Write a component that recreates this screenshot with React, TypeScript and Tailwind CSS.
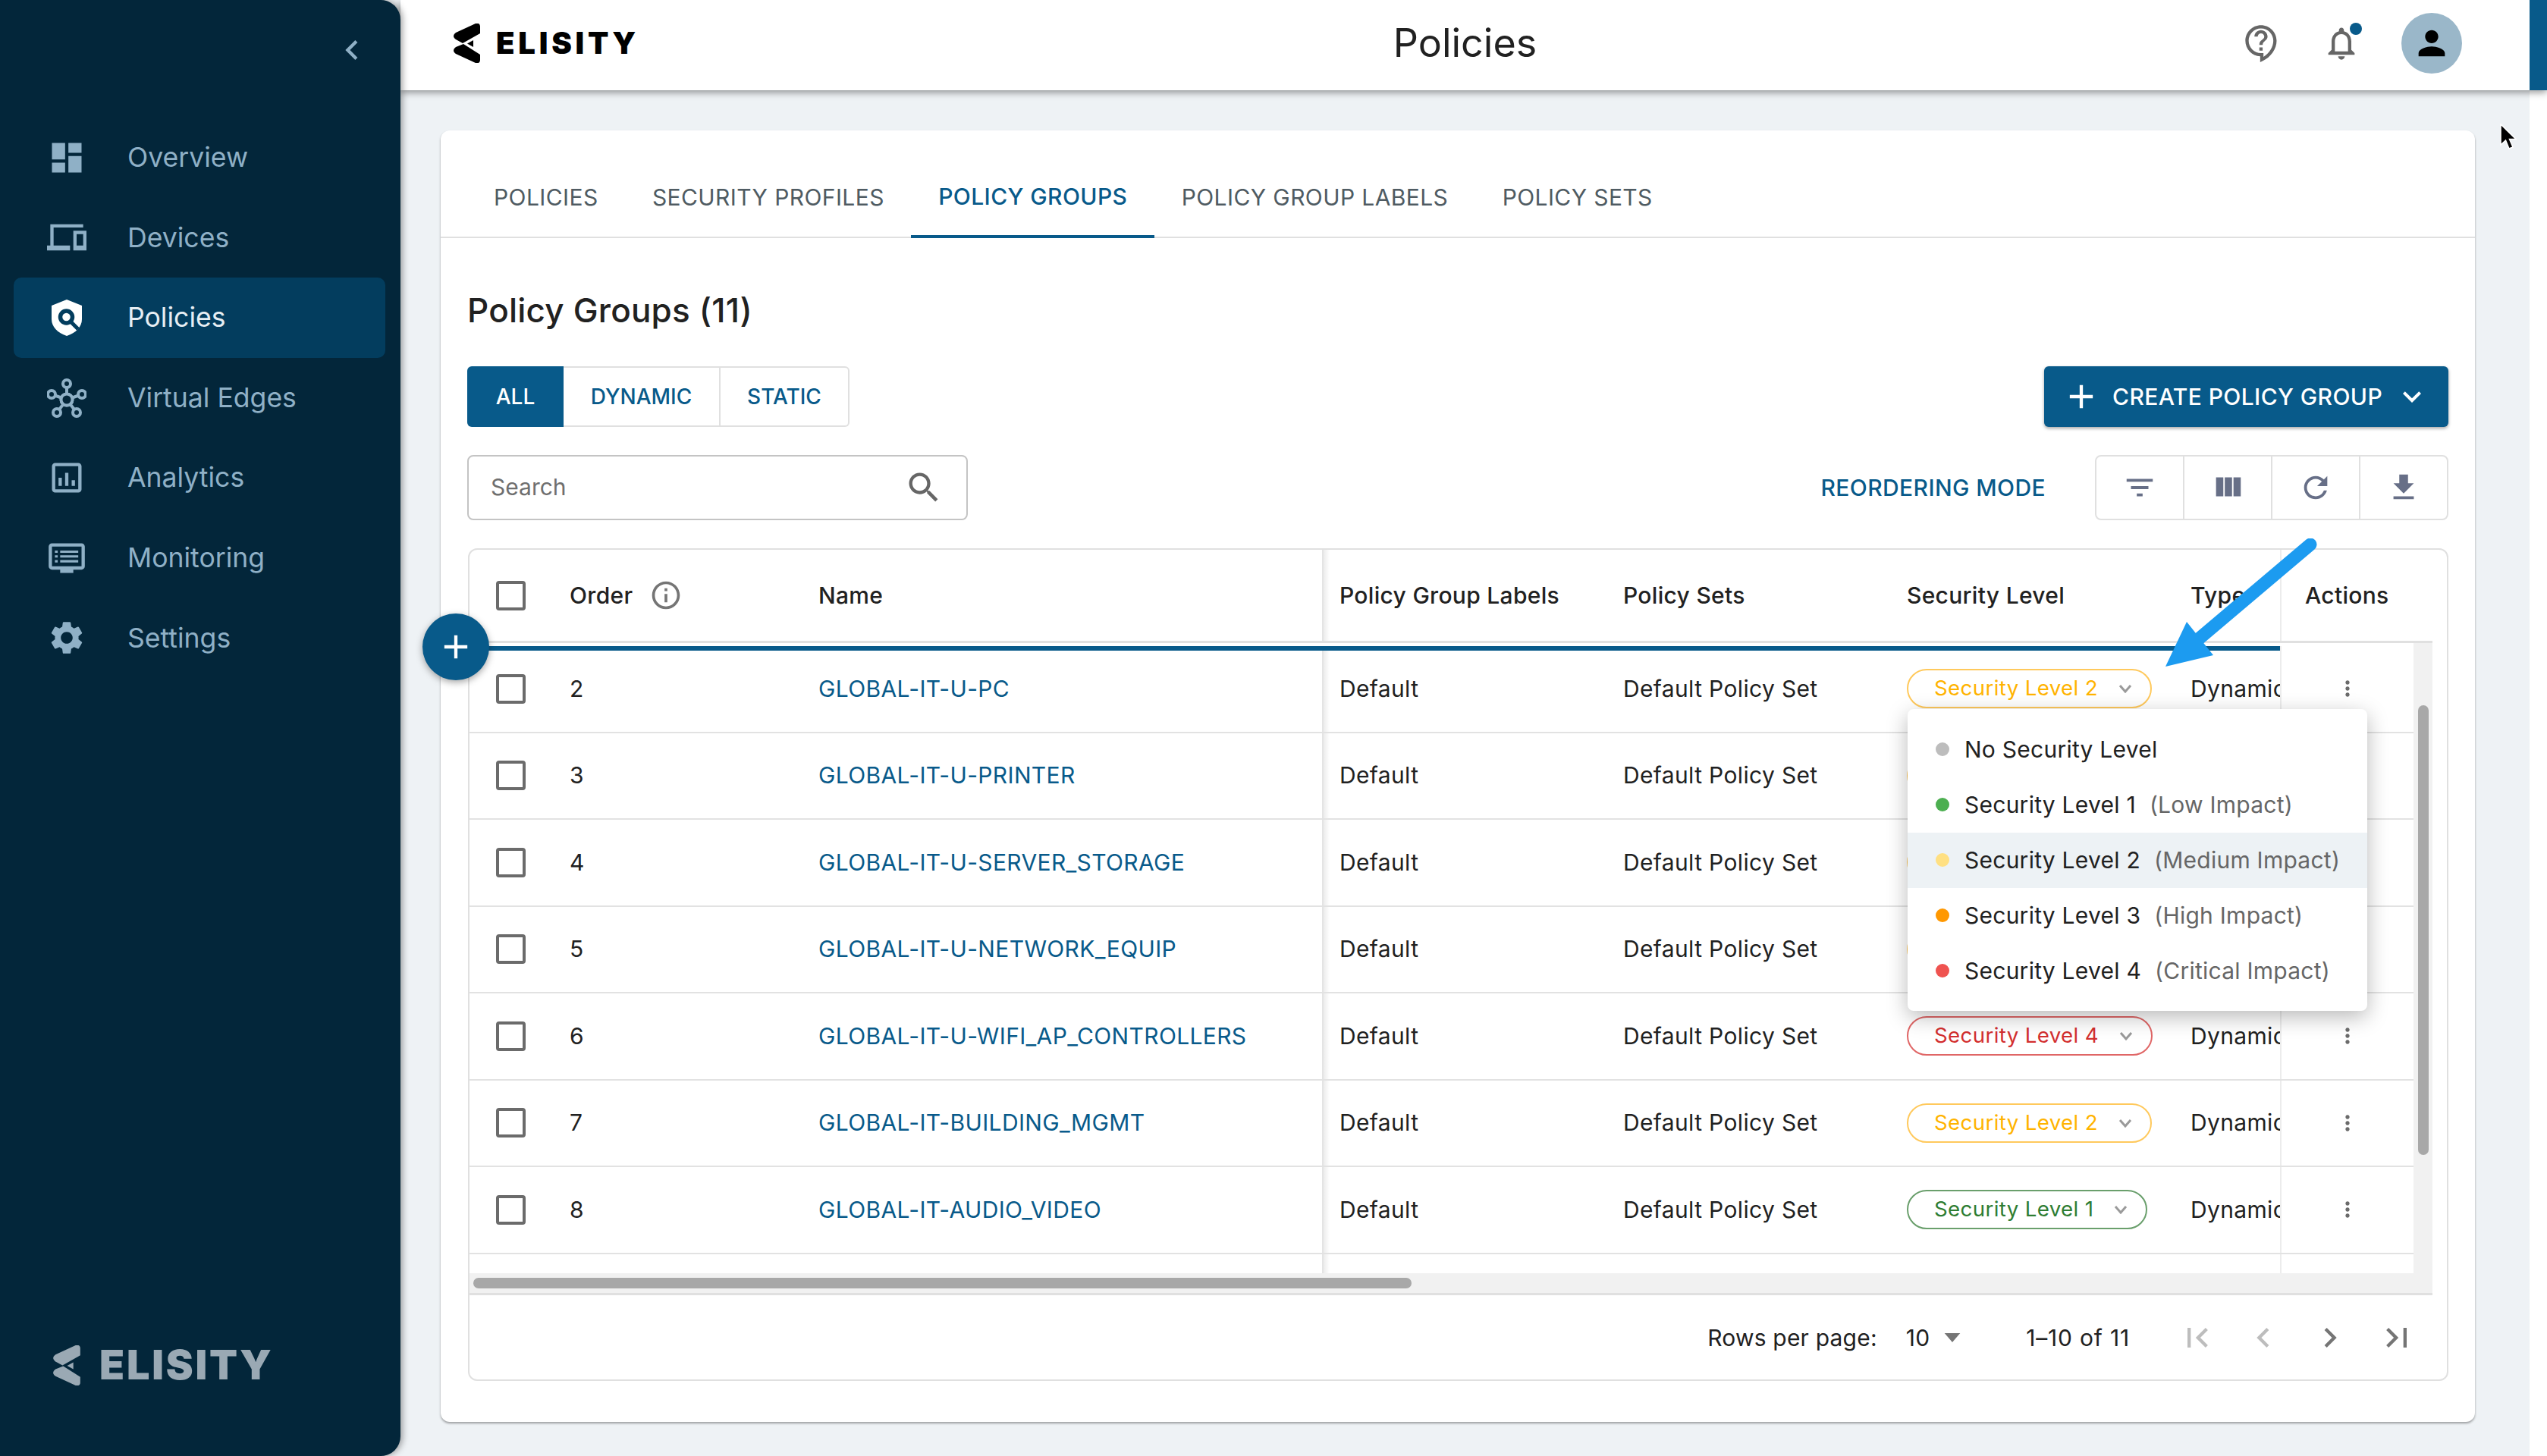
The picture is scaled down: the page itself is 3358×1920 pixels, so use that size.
import React from 'react';

const P = {
  dashboard: 'M3 13h8V3H3v10zm0 8h8v-6H3v6zm10 0h8V11h-8v10zm0-18v6h8V3h-8z',
  devices: 'M4 6h18V4H2v13H0v3h14v-3H4V6zm20 2h-8v12h8V8zm-2 9h-4v-7h4v7z',
  analytics: 'M19 3H5c-1.1 0-2 .9-2 2v14c0 1.1.9 2 2 2h14c1.1 0 2-.9 2-2V5c0-1.1-.9-2-2-2zm0 16H5V5h14v14zM7 12h2v5H7zM11 9h2v8h-2zM15 13.5h2V17h-2z',
  monitor: 'M21 3H3c-1.1 0-2 .9-2 2v12c0 1.1.9 2 2 2h5v2h8v-2h5c1.1 0 2-.9 2-2V5c0-1.1-.9-2-2-2zm0 14H3V5h18v12zM4.8 7.4h1.7v1.4H4.8zM8 7.4h11v1.4H8zM4.8 10.3h1.7v1.4H4.8zM8 10.3h11v1.4H8zM4.8 13.2h1.7v1.4H4.8zM8 13.2h11v1.4H8z',
  settings: 'M19.14 12.94c.04-.3.06-.61.06-.94 0-.32-.02-.64-.07-.94l2.03-1.58c.18-.14.23-.41.12-.61l-1.92-3.32c-.12-.22-.37-.29-.59-.22l-2.39.96c-.5-.38-1.03-.7-1.62-.94l-.36-2.54c-.04-.24-.24-.41-.48-.41h-3.84c-.24 0-.43.17-.47.41l-.36 2.54c-.59.24-1.13.57-1.62.94l-2.39-.96c-.22-.08-.47 0-.59.22L2.74 8.87c-.12.21-.08.47.12.61l2.03 1.58c-.05.3-.09.63-.09.94s.02.64.07.94l-2.03 1.58c-.18.14-.23.41-.12.61l1.92 3.32c.12.22.37.29.59.22l2.39-.96c.5.38 1.03.7 1.62.94l.36 2.54c.05.24.24.41.48.41h3.84c.24 0 .44-.17.47-.41l.36-2.54c.59-.24 1.13-.56 1.62-.94l2.39.96c.22.08.47 0 .59-.22l1.92-3.32c.12-.22.07-.47-.12-.61l-2.01-1.58zM12 15.6c-1.98 0-3.6-1.62-3.6-3.6s1.62-3.6 3.6-3.6 3.6 1.62 3.6 3.6-1.62 3.6-3.6 3.6z',
  search: 'M15.5 14h-.79l-.28-.27C15.41 12.59 16 11.11 16 9.5 16 5.91 13.09 3 9.5 3S3 5.91 3 9.5 5.91 16 9.5 16c1.61 0 3.09-.59 4.23-1.57l.27.28v.79l5 4.99L20.49 19l-4.99-5zm-6 0C7.01 14 5 11.99 5 9.5S7.01 5 9.5 5 14 7.01 14 9.5 11.99 14 9.5 14z',
  filter: 'M10 18h4v-2h-4v2zM3 6v2h18V6H3zm3 7h12v-2H6v2z',
  columns: 'M10 18h5V5h-5v13zm-6 0h5V5H4v13zM16 5v13h5V5h-5z',
  refresh: 'M17.65 6.35C16.2 4.9 14.21 4 12 4c-4.42 0-7.99 3.58-7.99 8s3.57 8 7.99 8c3.73 0 6.84-2.55 7.73-6h-2.08c-.82 2.33-3.04 4-5.65 4-3.31 0-6-2.69-6-6s2.69-6 6-6c1.66 0 3.14.69 4.22 1.78L13 11h7V4l-2.35 2.35z',
  download: 'M19 9h-4V3H9v6H5l7 7 7-7zM5 18v2h14v-2H5z',
  more: 'M12 8c1.1 0 2-.9 2-2s-.9-2-2-2-2 .9-2 2 .9 2 2 2zm0 2c-1.1 0-2 .9-2 2s.9 2 2 2 2-.9 2-2-.9-2-2-2zm0 6c-1.1 0-2 .9-2 2s.9 2 2 2 2-.9 2-2-.9-2-2-2z',
  info: 'M11 7h2v2h-2zm0 4h2v6h-2zm1-9C6.48 2 2 6.48 2 12s4.48 10 10 10 10-4.48 10-10S17.52 2 12 2zm0 18c-4.41 0-8-3.59-8-8s3.59-8 8-8 8 3.59 8 8-3.59 8-8 8z',
  bell: 'M12 22c1.1 0 2-.9 2-2h-4c0 1.1.9 2 2 2zm6-6v-5c0-3.07-1.63-5.64-4.5-6.32V4c0-.83-.67-1.5-1.5-1.5s-1.5.67-1.5 1.5v.68C7.64 5.36 6 7.92 6 11v5l-2 2v1h16v-1l-2-2zm-2 1H8v-6c0-2.48 1.51-4.5 4-4.5s4 2.02 4 4.5v6z',
  person: 'M12 12c2.21 0 4-1.79 4-4s-1.79-4-4-4-4 1.79-4 4 1.79 4 4 4zm0 2c-2.67 0-8 1.34-8 4v2h16v-2c0-2.66-5.33-4-8-4z',
  help: 'M11 23.59v-3.6c-5.01-.26-9-4.42-9-9.49C2 5.26 6.26 1 11.5 1S21 5.26 21 10.5c0 4.95-3.44 9.93-8.57 12.4l-1.43.69zM11.5 3C7.36 3 4 6.36 4 10.5S7.36 18 11.5 18H13v2.3c3.64-2.3 6-6.08 6-9.8C19 6.36 15.64 3 11.5 3zm-1 11.5h2v2h-2zm2-1.5h-2c0-3.25 3-3 3-5 0-1.1-.9-2-2-2s-2 .9-2 2h-2c0-2.21 1.79-4 4-4s4 1.79 4 4c0 2.5-3 2.75-3 5z',
  first: 'M18.41 16.59L13.82 12l4.59-4.59L17 6l-6 6 6 6zM6 6h2v12H6z',
  last: 'M5.59 7.41L10.18 12l-4.59 4.59L7 18l6-6-6-6zM16 6h2v12h-2z',
  left: 'M15.41 16.59L10.83 12l4.58-4.59L14 6l-6 6 6 6 1.41-1.41z',
  right: 'M8.59 16.59L13.17 12 8.59 7.41 10 6l6 6-6 6-1.41-1.41z',
  plus: 'M19 13h-6v6h-2v-6H5v-2h6V5h2v6h6v2z',
  chevDown: 'M7.41 8.59L12 13.17l4.59-4.58L18 10l-6 6-6-6 1.41-1.41z',
};

function Icon({ d, className }: { d: string; className: string }) {
  return (
    <svg viewBox="0 0 24 24" className={className} fill="currentColor">
      <path d={d} />
    </svg>
  );
}

function ShieldIcon() {
  return (
    <svg viewBox="0 0 52 52" className="h-[52px] w-[52px] shrink-0">
      <path d="M26 2 L46 10 V28 C46 38 38 46 26 50 C14 46 6 38 6 28 V10 Z" fill="#ffffff" />
      <circle cx="25.5" cy="25" r="8" fill="none" stroke="#033d5e" strokeWidth="5.5" />
      <path d="M31 31 L41 41" stroke="#033d5e" strokeWidth="5" />
    </svg>
  );
}

function HubIcon() {
  const nodes = [
    [26, 7],
    [6, 21],
    [46, 21],
    [13, 45],
    [39, 45],
  ];
  return (
    <svg viewBox="0 0 52 52" className="h-[52px] w-[52px] shrink-0" fill="none" stroke="currentColor" strokeWidth="4">
      <circle cx="26" cy="28" r="7.5" />
      {nodes.map(([x, y], i) => (
        <g key={i}>
          <line x1="26" y1="28" x2={x} y2={y} />
          <circle cx={x} cy={y} r="5" fill="#03263a" />
        </g>
      ))}
      <circle cx="26" cy="28" r="7.5" fill="#03263a" />
    </svg>
  );
}

function LogoMark({ className, bg }: { className: string; bg: string }) {
  return (
    <svg viewBox="0 0 35 52" className={className} fill="currentColor">
      <path d="M29 0 C33 -1 35 1 35 4 V13 L12 26 L3 21 C-1 18 -1 15 3 12 Z" />
      <path d="M3 31 C-1 34 -1 37 3 40 L29 52 C33 53 35 51 35 48 V41 L13 27 Z" />
      <path d="M16 26.5 L27 20 V33 Z" fill={bg} />
      <path d="M18 26.5 L26 22 V31 Z" />
    </svg>
  );
}

const navItems = [
  { label: 'Overview', icon: <Icon d={P.dashboard} className="h-[52px] w-[52px] shrink-0" /> },
  { label: 'Devices', icon: <Icon d={P.devices} className="h-[52px] w-[52px] shrink-0" /> },
  { label: 'Policies', icon: <ShieldIcon />, active: true },
  { label: 'Virtual Edges', icon: <HubIcon /> },
  { label: 'Analytics', icon: <Icon d={P.analytics} className="h-[52px] w-[52px] shrink-0" /> },
  { label: 'Monitoring', icon: <Icon d={P.monitor} className="h-[52px] w-[52px] shrink-0" /> },
  { label: 'Settings', icon: <Icon d={P.settings} className="h-[52px] w-[52px] shrink-0" /> },
];

function Sidebar() {
  return (
    <aside className="relative z-20 flex h-full w-[528px] shrink-0 flex-col rounded-r-[26px] bg-[#03263a] text-[#8fb0c6] shadow-[3px_0_8px_rgba(0,0,0,0.35)]">
      <div className="flex h-[155px] shrink-0 justify-end pt-[40px] pr-[38px]">
        <Icon d={P.left} className="h-[52px] w-[52px]" />
      </div>
      <nav className="flex flex-col pr-[20px] pl-[18px]">
        {navItems.map((n) => (
          <div
            key={n.label}
            className={
              n.active
                ? 'flex h-[105.6px] items-center gap-[54px] rounded-[10px] bg-[#033d5e] pl-[44px] text-[35.6px] text-[#e6eef3]'
                : 'flex h-[105.6px] items-center gap-[54px] rounded-[10px] pl-[44px] text-[35.6px]'
            }
          >
            {n.icon}
            <span>{n.label}</span>
          </div>
        ))}
      </nav>
      <div className="mt-auto flex items-center gap-[25px] pb-[93px] pl-[70px] text-[#9aa9b4]">
        <LogoMark className="h-[53px] w-[36px]" bg="#03263a" />
        <span className="text-[54px] leading-[54px] font-black tracking-[2.8px]">ELISITY</span>
      </div>
    </aside>
  );
}

function TopBar() {
  return (
    <header className="relative z-10 grid h-[119px] shrink-0 grid-cols-[1fr_auto_1fr] items-center bg-white pr-[23px] pb-[5px] shadow-[0_3px_9px_rgba(0,0,0,0.4)]">
      <div className="flex items-center gap-[21px] pl-[70px] text-black">
        <LogoMark className="h-[52px] w-[35px]" bg="#ffffff" />
        <span className="text-[40px] leading-[40px] font-black tracking-[4.8px]">ELISITY</span>
      </div>
      <h1 className="text-[52px] leading-none font-normal text-[#212121]">Policies</h1>
      <div className="flex items-center justify-end gap-[53px] pr-[89px] text-[#666666]">
        <Icon d={P.help} className="h-[52px] w-[52px]" />
        <div className="relative h-[52px] w-[52px]">
          <Icon d={P.bell} className="h-[52px] w-[52px]" />
          <span className="absolute top-[-1px] left-[37px] h-[16px] w-[16px] rounded-full bg-[#085a8a]" />
        </div>
        <div className="flex h-[80px] w-[80px] items-center justify-center rounded-full bg-[#9ab7c9] text-black">
          <Icon d={P.person} className="h-[52px] w-[52px]" />
        </div>
      </div>
      <div className="absolute top-0 right-0 h-[119px] w-[23px] bg-[#085a8a]" />
    </header>
  );
}

const tabs = ['POLICIES', 'SECURITY PROFILES', 'POLICY GROUPS', 'POLICY GROUP LABELS', 'POLICY SETS'];

function Tabs() {
  return (
    <div className="flex h-[142px] shrink-0 border-b-2 border-[#e0e0e0] pt-[32px] pl-[34.3px]">
      {tabs.map((t) => (
        <div
          key={t}
          className={
            t === 'POLICY GROUPS'
              ? 'mb-[-2px] flex items-center border-b-[4px] border-[#085a8a] px-[35.7px] pt-[4px] text-[30px] font-medium tracking-[0.4px] text-[#085a8a]'
              : 'flex items-center px-[35.7px] pt-[4px] text-[30px] tracking-[0.4px] text-[#4f5b62]'
          }
        >
          {t}
        </div>
      ))}
    </div>
  );
}

function Checkbox() {
  return <div className="h-[39px] w-[39px] shrink-0 rounded-[4px] border-[4px] border-[#6b6b6b]" />;
}

type Level = 1 | 2 | 4;
const chipStyles: Record<Level, string> = {
  1: 'border-[#6a9f6c] text-[#2e7d32]',
  2: 'border-[#ffc95c] text-[#ffb300]',
  4: 'border-[#e06666] text-[#d32f2f]',
};

function Chip({ level }: { level: Level }) {
  return (
    <div className={`inline-flex h-[52px] items-center rounded-full border-2 pr-[24px] pl-[34px] text-[27.7px] ${chipStyles[level]}`}>
      <span>Security Level {level}</span>
      <svg viewBox="0 0 18 12" className="ml-[27px] h-[12px] w-[18px]" fill="none" stroke="#9a9a9a" strokeWidth="3">
        <path d="M2 2 L9 10 L16 2" />
      </svg>
    </div>
  );
}

const rows: { order: number; name: string; level: Level }[] = [
  { order: 2, name: 'GLOBAL-IT-U-PC', level: 2 },
  { order: 3, name: 'GLOBAL-IT-U-PRINTER', level: 2 },
  { order: 4, name: 'GLOBAL-IT-U-SERVER_STORAGE', level: 2 },
  { order: 5, name: 'GLOBAL-IT-U-NETWORK_EQUIP', level: 2 },
  { order: 6, name: 'GLOBAL-IT-U-WIFI_AP_CONTROLLERS', level: 4 },
  { order: 7, name: 'GLOBAL-IT-BUILDING_MGMT', level: 2 },
  { order: 8, name: 'GLOBAL-IT-AUDIO_VIDEO', level: 1 },
];

function TableHeader() {
  return (
    <div className="flex h-[123px] w-[2588px] shrink-0 border-b-[3px] border-[#e0e0e0] text-[30px] leading-none font-medium tracking-[0.3px] text-[#212121]">
      <div className="flex w-[132px] shrink-0 items-center pl-[35px]">
        <Checkbox />
      </div>
      <div className="flex w-[328px] shrink-0 items-center gap-[22px]">
        <span>Order</span>
        <Icon d={P.info} className="h-[44px] w-[44px] text-[#757575]" />
      </div>
      <div className="flex w-[666px] shrink-0 items-center border-r-2 border-[#e4e4e4]">Name</div>
      <div className="flex w-[395px] shrink-0 items-center bg-[linear-gradient(90deg,#ececec,#ffffff_8px)] pl-[21px]">Policy Group Labels</div>
      <div className="flex w-[374px] shrink-0 items-center">Policy Sets</div>
      <div className="flex w-[374px] shrink-0 items-center">Security Level</div>
      <div className="flex w-[118px] shrink-0 items-center overflow-hidden">Type</div>
      <div className="flex flex-1 items-center border-l-2 border-[#ececec] pl-[31px]">Actions</div>
    </div>
  );
}

function TableRow({ order, name, level }: { order: number; name: string; level: Level }) {
  return (
    <div className="flex h-[114.5px] shrink-0 border-b-2 border-[#e2e2e2] text-[30px] tracking-[0.35px] text-[#212121]">
      <div className="flex w-[132px] shrink-0 items-center pl-[35px]">
        <Checkbox />
      </div>
      <div className="flex w-[328px] shrink-0 items-center">{order}</div>
      <div className="flex w-[666px] shrink-0 items-center border-r-2 border-[#e4e4e4] text-[#085a8a]">{name}</div>
      <div className="flex w-[395px] shrink-0 items-center bg-[linear-gradient(90deg,#ececec,#ffffff_8px)] pl-[21px]">Default</div>
      <div className="flex w-[374px] shrink-0 items-center">Default Policy Set</div>
      <div className="flex w-[374px] shrink-0 items-center">
        <Chip level={level} />
      </div>
      <div className="flex w-[118px] shrink-0 items-center overflow-hidden">Dynamic</div>
      <div className="flex flex-1 items-center border-l-2 border-[#ececec] pl-[71px] text-[#6b6b6b]">
        <Icon d={P.more} className="h-[32px] w-[32px]" />
      </div>
    </div>
  );
}

function Table() {
  return (
    <div className="ml-[1px] flex h-[1098px] shrink-0 flex-col overflow-hidden rounded-[12px] border-2 border-[#e0e0e0]">
      <TableHeader />
      <div className="flex h-[831px] w-[2588px] shrink-0">
        <div className="relative flex w-[2563px] shrink-0 flex-col overflow-hidden pt-[4px]">
          {rows.map((r) => (
            <TableRow key={r.order} {...r} />
          ))}
          <div className="flex flex-1">
            <div className="w-[1126px] border-r-2 border-[#e4e4e4]" />
            <div className="w-[1261px] bg-[linear-gradient(90deg,#ececec,#ffffff_8px)]" />
            <div className="flex-1 border-l-2 border-[#ececec]" />
          </div>
          <div className="absolute top-[4px] left-0 h-[6px] w-[2387px] bg-[#085a8a]" />
        </div>
        <div className="flex-1 bg-[#f1f1f1] pt-[82px] pl-[6px]">
          <div className="h-[593px] w-[14px] rounded-full bg-[#a8a8a8]" />
        </div>
      </div>
      <div className="flex h-[29px] w-[2588px] shrink-0 items-center border-b-[3px] border-[#e0e0e0] bg-[#f1f1f1] pl-[5px]">
        <div className="h-[14px] w-[1237px] rounded-full bg-[#a8a8a8]" />
      </div>
      <div className="flex flex-1 items-center justify-end pt-[1px] pr-[40px] text-[30px] tracking-[0.2px] text-[#212121]">
        <span>Rows per page:</span>
        <span className="ml-[38px]">10</span>
        <svg viewBox="0 0 24 14" className="ml-[18px] h-[12px] w-[24px]" fill="#757575">
          <path d="M0 0 H24 L12 14 Z" />
        </svg>
        <span className="mr-[63px] ml-[85px] tracking-[0.8px]">1–10 of 11</span>
        <Icon d={P.first} className="h-[52px] w-[52px] text-[#bdbdbd]" />
        <Icon d={P.left} className="ml-[35px] h-[52px] w-[52px] text-[#bdbdbd]" />
        <Icon d={P.right} className="ml-[36px] h-[52px] w-[52px] text-[#757575]" />
        <Icon d={P.last} className="ml-[36px] h-[52px] w-[52px] text-[#757575]" />
      </div>
    </div>
  );
}

function Toolbar() {
  return (
    <>
      <div className="flex h-[80px] shrink-0 items-center justify-between">
        <div className="flex h-[80px] text-[28px] font-medium">
          <div className="flex w-[127px] items-center justify-center rounded-l-[6px] bg-[#085a8a] text-white">ALL</div>
          <div className="flex w-[207px] items-center justify-center border-y-2 border-r-2 border-[#e0e0e0] text-[#085a8a]">DYNAMIC</div>
          <div className="flex w-[170px] items-center justify-center rounded-r-[6px] border-y-2 border-r-2 border-[#e0e0e0] text-[#085a8a]">STATIC</div>
        </div>
        <div className="flex h-[80px] w-[533px] items-center rounded-[6px] bg-[#085a8a] pl-[23px] text-[30px] font-medium tracking-[0.4px] text-white shadow-[0_2px_4px_rgba(0,0,0,0.35)]">
          <Icon d={P.plus} className="h-[52px] w-[52px]" />
          <span className="ml-[15px]">CREATE POLICY GROUP</span>
          <Icon d={P.chevDown} className="ml-[15px] h-[48px] w-[48px]" />
        </div>
      </div>
      <div className="mt-[37px] flex h-[86px] shrink-0 items-center">
        <div className="flex h-[86px] w-[660px] items-center justify-between rounded-[8px] border-2 border-[#c4c4c4] pr-[30px] pl-[29px] text-[30px] leading-[36px] text-[#6f6f6f]">
          <span className="pb-[2px]">Search</span>
          <Icon d={P.search} className="h-[52px] w-[52px] text-[#666666]" />
        </div>
        <div className="ml-auto text-[30px] font-medium tracking-[0.4px] text-[#085a8a]">REORDERING MODE</div>
        <div className="ml-[65px] flex h-[86px] w-[466px] rounded-[8px] border-2 border-[#e0e0e0] text-[#676f87]">
          <div className="flex flex-1 items-center justify-center border-r-2 border-[#e0e0e0]">
            <Icon d={P.filter} className="h-[46px] w-[46px]" />
          </div>
          <div className="flex flex-1 items-center justify-center border-r-2 border-[#e0e0e0]">
            <Icon d={P.columns} className="h-[46px] w-[46px]" />
          </div>
          <div className="flex flex-1 items-center justify-center border-r-2 border-[#e0e0e0]">
            <Icon d={P.refresh} className="h-[46px] w-[46px]" />
          </div>
          <div className="flex flex-1 items-center justify-center">
            <Icon d={P.download} className="h-[46px] w-[46px]" />
          </div>
        </div>
      </div>
    </>
  );
}

const menuItems = [
  { dot: 'bg-[#bdbdbd]', label: 'No Security Level', note: '' },
  { dot: 'bg-[#4caf50]', label: 'Security Level 1', note: '(Low Impact)' },
  { dot: 'bg-[#ffe082]', label: 'Security Level 2', note: '(Medium Impact)', active: true },
  { dot: 'bg-[#ff9800]', label: 'Security Level 3', note: '(High Impact)' },
  { dot: 'bg-[#ef5350]', label: 'Security Level 4', note: '(Critical Impact)' },
];

function LevelMenu() {
  return (
    <div className="absolute top-[935px] left-[2515px] z-30 flex h-[398px] w-[606px] flex-col justify-center rounded-[8px] bg-white shadow-[0_8px_28px_rgba(0,0,0,0.28)]">
      {menuItems.map((m) => (
        <div
          key={m.label}
          className={
            m.active
              ? 'flex h-[73px] items-center bg-[#edf2f5] pl-[37px] text-[30px] tracking-[0.25px] text-[#212121]'
              : 'flex h-[73px] items-center pl-[37px] text-[30px] tracking-[0.25px] text-[#212121]'
          }
        >
          <span className={`mr-[20px] h-[18px] w-[18px] shrink-0 rounded-full ${m.dot}`} />
          <span>{m.label}</span>
          {m.note ? <span className="ml-[18px] text-[#666666]">{m.note}</span> : null}
        </div>
      ))}
    </div>
  );
}

export default function App() {
  return (
    <div className="relative flex h-[1920px] w-[3358px] overflow-hidden bg-[#eef2f5] font-[family-name:Inter,sans-serif]">
      <Sidebar />
      <main className="flex h-full min-w-0 flex-1 flex-col">
        <TopBar />
        <div className="flex min-h-0 flex-1">
          <div className="flex-1 pt-[53px] pl-[53px]">
            <section className="flex h-[1703px] w-[2682px] flex-col rounded-[12px] bg-white shadow-[0_2px_3px_rgba(0,0,0,0.35)]">
              <Tabs />
              <div className="flex flex-1 flex-col px-[35px]">
                <h2 className="mt-[66px] mb-[42px] h-[58px] text-[44px] leading-[58px] font-medium tracking-[0.2px] text-[#212121]">Policy Groups (11)</h2>
                <div className="mt-[3px] flex flex-col">
                  <Toolbar />
                  <div className="mt-[37px]">
                    <Table />
                  </div>
                </div>
              </div>
            </section>
          </div>
          <div className="w-[23px] shrink-0 bg-white" />
        </div>
      </main>

      <div className="absolute top-[809px] left-[557px] z-30 flex h-[88px] w-[88px] items-center justify-center rounded-full bg-[#085a8a] text-white shadow-[0_3px_10px_rgba(0,0,0,0.35)]">
        <Icon d={P.plus} className="h-[52px] w-[52px]" />
      </div>

      <LevelMenu />

      <svg className="absolute top-[710px] left-[2840px] z-40 h-[180px] w-[220px]" viewBox="0 0 220 180" fill="#1c9bf0">
        <path d="M206 8 L50 140" stroke="#1c9bf0" strokeWidth="17" strokeLinecap="round" />
        <path d="M15 169 L43 110 L78 154 Z" />
      </svg>

      <svg className="absolute top-[163px] left-[3295px] z-40 h-[36px] w-[24px]" viewBox="0 0 24 36">
        <path d="M2 1 V28 L8.5 22 L13 33 L18 31 L13.5 20.5 H22 Z" fill="#000000" stroke="#ffffff" strokeWidth="1.5" />
      </svg>
    </div>
  );
}
